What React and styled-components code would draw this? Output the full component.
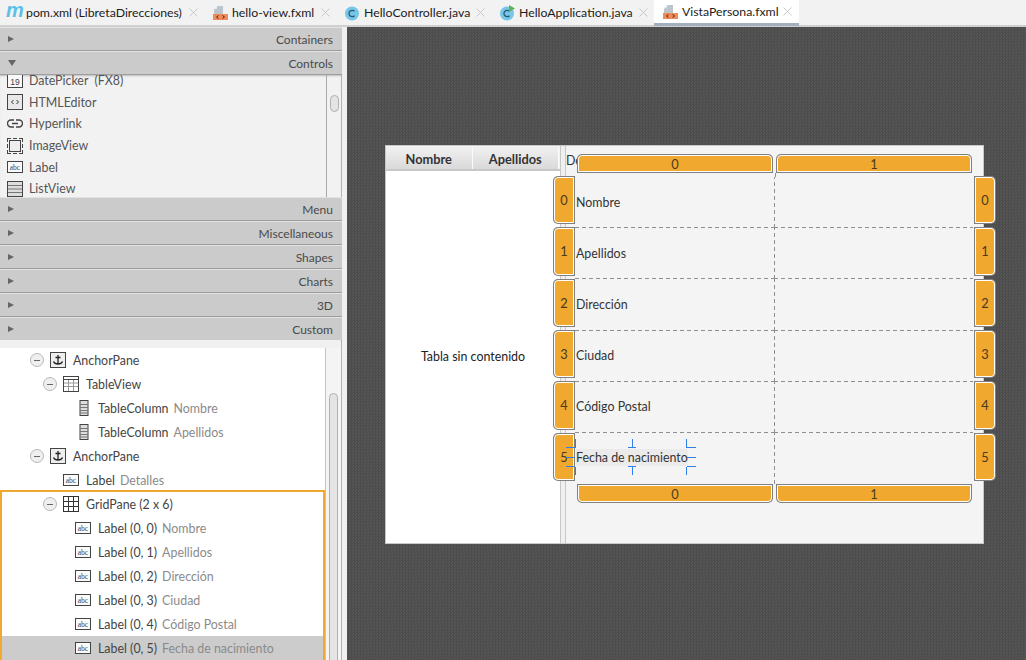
import styled, { createGlobalStyle } from 'styled-components'

const GlobalStyle = createGlobalStyle`
    html, body {
        margin: 0;
        padding: 0;
        background: #f2f2f2;
    }
    * {
        box-sizing: border-box;
    }
`

const Page = styled.div`
    width: 1026px;
    height: 660px;
    overflow: hidden;
    display: flex;
    flex-direction: column;
    font-family: Lato, "Open Sans", sans-serif;
    font-size: 12.4px;
    color: #444;
`

const TabBar = styled.div`
    height: 27px;
    flex: none;
    display: flex;
    background: #f2f2f2;
    border-bottom: 2px solid #d0d0d0;
`

const Tab = styled.div`
    display: flex;
    align-items: center;
    height: ${ p => p.$active ? `26px` : `25px` };
    width: ${ p => p.$w }px;
    padding-left: ${ p => p.$active ? 9 : 6 }px;
    flex: none;
    background: ${ p => p.$active ? `#fff` : `transparent` };
    border-bottom: ${ p => p.$active ? `3px solid #a3afbd` : `none` };
    font-size: 12.3px;
    color: #1c1c1c;
    white-space: nowrap;
`

const TabName = styled.span`
    margin-left: 4px;
    width: ${ p => p.$w }px;
    flex: none;
`

const TabClose = styled.span`
    display: flex;
    margin-left: 6px;
    color: #c8c8c8;
`

const MavenMark = styled.span`
    width: 16px;
    flex: none;
    font: italic bold 20px/20px "Liberation Sans", sans-serif;
    color: #5cc0e8;
    margin-top: -6px;
    letter-spacing: -1px;
`

const Main = styled.div`
    flex: 1;
    min-height: 0;
    display: flex;
`

const Sidebar = styled.div`
    width: 342px;
    flex: none;
    display: flex;
    flex-direction: column;
    border-right: 1px solid #b4b4b4;
    background: #f2f2f2;
`

const Section = styled.div`
    height: 24px;
    flex: none;
    display: flex;
    align-items: center;
    justify-content: space-between;
    padding: 0 9px 0 8px;
    margin-right: -1px;
    background: #cbcbcb;
    border-top: 1px solid #e2e2e2;
    border-bottom: 1px solid #9e9e9e;
    color: #4a4a4a;
    font-size: 12px;
`

const Arrow = styled.span`
    width: 0;
    height: 0;
    ${ p => p.$open
        ? `border-top: 6px solid #666; border-left: 4px solid transparent; border-right: 4px solid transparent;`
        : `border-left: 6px solid #666; border-top: 3.5px solid transparent; border-bottom: 3.5px solid transparent;` }
`

const Palette = styled.div`
    height: 122px;
    flex: none;
    display: flex;
    overflow: hidden;
    box-shadow: inset 0 2px 2px -1px #bbb;
`

const PaletteList = styled.div`
    width: 327px;
    flex: none;
    margin-top: -5px;
    border-right: 1px solid #a8a8a8;
`

const PaletteItem = styled.div`
    height: 21.6px;
    display: flex;
    align-items: center;
    gap: 6px;
    padding-left: 7px;
    color: #555;
    white-space: pre;
`

const Thumb = styled.div`
    border: 1px solid #b0b0b0;
    border-radius: 5px;
    background: #e4e4e4;
`

const PaletteTrack = styled.div`
    flex: 1;
    padding: 20px 3px 0 3px;

    ${ Thumb } {
        width: 9px;
        height: 17px;
    }
`

const SectionGap = styled.div`
    height: 8px;
    flex: none;
    background: #f0f0f0;
    margin-top: -1px;
`

const Hierarchy = styled.div`
    flex: 1;
    min-height: 0;
    display: flex;
    overflow: hidden;
`

const Tree = styled.div`
    width: 326px;
    flex: none;
    background: #fff;
    border-right: 1px solid #c4c4c4;
`

const SelectedGroup = styled.div`
    width: 325px;
    box-shadow: 0 -2px 0 #f0a830, inset 2px 0 0 #f0a830, inset -2px 0 0 #f0a830;
    position: relative;
`

const TreeRow = styled.div`
    height: 24px;
    display: flex;
    align-items: center;
    padding-left: ${ p => p.$indent }px;
    margin: ${ p => p.$selected ? `0 2px` : `0` };
    background: ${ p => p.$selected ? `#cccccc` : `transparent` };
    color: #444;
    white-space: nowrap;
`

const Toggle = styled.span`
    width: 14px;
    height: 14px;
    flex: none;
    margin-right: 6px;
    border-radius: 50%;
    border: 1px solid #b8b8b8;
    background: #efefef;
    display: flex;
    align-items: center;
    justify-content: center;

    &::before {
        content: "";
        width: 6px;
        height: 1px;
        background: #666;
    }
`

const TreeName = styled.span`
    margin-left: ${ p => p.$gap ?? 7 }px;
`

const TreeDetail = styled.span`
    margin-left: 5px;
    color: #8a8a8a;
`

const TreeTrack = styled.div`
    flex: 1;
    padding: 45px 3px 0 3px;
    background: #f4f4f4;

    ${ Thumb } {
        width: 9px;
        height: 300px;
    }
`

const Splitter = styled.div`
    width: 5px;
    flex: none;
    background: #f0f0f0;
`

const Canvas = styled.div`
    flex: 1;
    min-width: 0;
    padding: 118px 0 0 38px;
    background-color: #505050;
    background-image: repeating-conic-gradient(#4c4c4c 0 25%, #555 0 50%);
    background-size: 3px 3px;
`

const Form = styled.div`
    width: 599px;
    height: 399px;
    display: flex;
    background: #f4f4f4;
    border: 1px solid #c8c8c8;
`

const Table = styled.div`
    width: 174px;
    flex: none;
    display: flex;
    flex-direction: column;
    background: #fff;
`

const TableHead = styled.div`
    height: 25px;
    flex: none;
    display: flex;
    border-bottom: 2px solid #c8c8c8;
    padding-right: 1px;
    background: #f4f4f4;
`

const HeadCell = styled.div`
    flex: 1;
    display: flex;
    align-items: center;
    justify-content: center;
    padding-top: 2px;
    background: linear-gradient(#f2f2f2, #d9d9d9);
    border-right: 1px solid #fafafa;
    font-weight: 700;
    font-size: 12.8px;
    color: #333;
`

const TableEmpty = styled.div`
    flex: 1;
    display: flex;
    align-items: center;
    justify-content: center;
    padding-bottom: 1px;
    color: #222;
`

const Divider = styled.div`
    width: 6px;
    flex: none;
    background: #f0f0f0;
    border-left: 1px solid #c8c8c8;
    border-right: 1px solid #c8c8c8;
`

const Details = styled.div`
    flex: 1;
    min-width: 0;
    padding-left: 9px;
    display: flex;
    flex-direction: column;
`

const DetailsTitle = styled.div`
    height: 31px;
    flex: none;
    margin-left: -9px;
    padding-top: 7px;
    color: #333;
`

const GridWrap = styled.div`
    position: relative;
    width: 398px;
    height: 307px;

    &::after {
        content: "";
        position: absolute;
        left: 200px;
        top: -4px;
        width: 1px;
        height: 4px;
        background: #8f8f8f;
    }
`

const Grid = styled.div`
    width: 100%;
    height: 100%;
    display: grid;
    grid-template-columns: 1fr 1fr;
    grid-template-rows: repeat(6, 1fr);
`

const dash_h = `repeating-linear-gradient(90deg, #8f8f8f 0 4px, transparent 4px 7px) left bottom / 100% 1px no-repeat`
const dash_v = `repeating-linear-gradient(0deg, #8f8f8f 0 4px, transparent 4px 7px) left top / 1px 100% no-repeat`

const Cell = styled.div`
    display: flex;
    align-items: center;
    padding-left: 1px;
    background: ${ p => [ !p.$last && dash_h, p.$right && dash_v ].filter( Boolean ).join( `, ` ) || `none` };
`

const CellLabel = styled.span`
    display: flex;
    align-items: center;
    height: 17px;
    margin-top: -1px;
    background: ${ p => p.$selected ? `#ebebeb` : `transparent` };
    color: #333;
    white-space: nowrap;
`

const ColumnHandles = styled.div`
    position: absolute;
    left: 3px;
    width: 393px;
    height: 17px;
    display: flex;
    gap: 5px;
    ${ p => p.$side === `top` ? `top: -22px;` : `bottom: -18px;` }
`

const RowHandles = styled.div`
    position: absolute;
    top: 0;
    width: 20px;
    height: 303px;
    display: flex;
    flex-direction: column;
    gap: 5px;
    ${ p => p.$side === `left` ? `left: -21px;` : `left: 400px;` }
`

const radius = {
    top: `4px 4px 0 0`,
    bottom: `0 0 4px 4px`,
    left: `4px 0 0 4px`,
    right: `0 4px 4px 0`
}

const Handle = styled.div`
    flex: 1;
    display: flex;
    align-items: center;
    justify-content: center;
    background: #f0a82e;
    border: 1px solid #fff;
    border-radius: ${ p => radius[ p.$side ] };
    box-shadow: 0 0 0 1px #808080;
    color: #4a3a20;
    font-size: 12.8px;
`

const SelectionMarks = styled.svg`
    position: absolute;
    left: -10px;
    top: 261px;
    pointer-events: none;
`

const Dim = ( { children, ...props } ) => <svg width="16" height="16" viewBox="0 0 16 16" style={ { flex: `none` } } { ...props }>{ children }</svg>

const DateIcon = () => <Dim>
    <rect x=".5" y="1.5" width="15" height="13" fill="#fafafa" stroke="#444" />
    <text x="8" y="11.5" fontSize="8.5" fontFamily="Liberation Sans" textAnchor="middle" fill="#444">19</text>
</Dim>

const HtmlIcon = () => <Dim>
    <rect x=".5" y=".5" width="15" height="15" fill="#e8e8e8" stroke="#444" />
    <path d="M6.5 6 L4.5 8 L6.5 10 M9.5 6 L11.5 8 L9.5 10" fill="none" stroke="#333" />
</Dim>

const LinkIcon = () => <Dim>
    <path d="M7 4H4a3.500 3.500 0 0 0 0 7h3M9 4h3a3.500 3.500 0 0 1 0 7H9M5 7.500h6" fill="none" stroke="#444" strokeWidth="1.4" />
</Dim>

const ImageIcon = () => <Dim>
    <rect x="2.5" y="2.5" width="11" height="11" fill="#eee" stroke="#444" />
    <path d="M0 .5h4M6 .5h4M12 .5h4M0 15.5h4M6 15.5h4M12 15.5h4M.5 0v4M.5 6v4M.5 12v4M15.5 0v4M15.5 6v4M15.5 12v4" stroke="#444" />
</Dim>

const LabelIcon = () => <Dim>
    <rect x=".5" y="2.5" width="15" height="11" fill="#fafafa" stroke="#444" />
    <text x="8" y="10.5" fontSize="7.5" fontFamily="Liberation Serif" textAnchor="middle" fill="#444">abc</text>
</Dim>

const ListIcon = () => <Dim>
    <rect x=".5" y=".5" width="15" height="15" fill="#ddd" stroke="#444" />
    <path d="M1 4.5h14M1 8h14M1 11.5h14" stroke="#777" />
</Dim>

const AnchorIcon = () => <Dim>
    <rect x=".5" y=".5" width="15" height="15" fill="#eee" stroke="#444" />
    <path d="M8 3v9M5.5 5.5h5M3.5 9.5c1 2.5 3 2.5 4.5 2.5s3.500 0 4.500-2.500" fill="none" stroke="#222" strokeWidth="1.3" />
</Dim>

const TableIcon = () => <Dim>
    <rect x=".5" y=".5" width="15" height="15" fill="#fff" stroke="#444" />
    <path d="M1 3.5h14" stroke="#444" />
    <path d="M1 7h14M1 10.500h14M5.500 4v11M10.500 4v11" stroke="#999" />
</Dim>

const ColumnIcon = () => <Dim>
    <rect x="4" y=".5" width="8" height="15" fill="#ddd" stroke="#444" />
    <path d="M4 4.500h8M4 7.500h8M4 10.500h8M4 13h8" stroke="#777" />
</Dim>

const GridIcon = () => <Dim>
    <rect x=".5" y=".5" width="15" height="15" fill="#fff" stroke="#333" />
    <path d="M5.500 1v14M10.500 1v14M1 5.500h14M1 10.500h14" stroke="#333" />
</Dim>

const XmlIcon = () => <svg width="15" height="16" viewBox="0 0 15 16" style={ { flex: `none` } }>
    <path d="M5 1h5v8H1V5z" fill="#bcc4cc" />
    <path d="M4 1v3H1z" fill="#e4e8ec" />
    <rect y="9" width="15" height="6" fill="#ef8a5c" />
    <path d="M5.500 10.500 L3.500 12 L5.500 13.500 M9.500 10.500 L11.500 12 L9.500 13.500" fill="none" stroke="#5a2a10" />
</svg>

const ClassIcon = ( { run } ) => <svg width="15" height="16" viewBox="0 0 15 16" style={ { flex: `none` } }>
    <circle cx="7" cy="8.500" r="7" fill="#75c6e8" />
    <path d="M9.500 6.300 A3.200 3.200 0 1 0 9.500 10.700" fill="none" stroke="#2a5a70" strokeWidth="1.300" />
    { run && <path d="M9 0v7l6-3.500z" fill="#5cb450" /> }
</svg>

const CloseIcon = () => <svg width="9" height="9" viewBox="0 0 9 9">
    <path d="M.5 .5l8 8M8.500 .5l-8 8" stroke="currentColor" strokeWidth="1" />
</svg>

const tabs = [
    { name: `pom.xml (LibretaDirecciones)`, w: 207, name_w: 157, icon: <MavenMark>m</MavenMark> },
    { name: `hello-view.fxml`, w: 132, name_w: 83, icon: <XmlIcon /> },
    { name: `HelloController.java`, w: 155, name_w: 106, icon: <ClassIcon /> },
    { name: `HelloApplication.java`, w: 160, name_w: 114, icon: <ClassIcon run /> },
    { name: `VistaPersona.fxml`, w: 145, name_w: 95, icon: <XmlIcon />, active: true },
]

const controls = [
    { name: `DatePicker  (FX8)`, icon: <DateIcon /> },
    { name: `HTMLEditor`, icon: <HtmlIcon /> },
    { name: `Hyperlink`, icon: <LinkIcon /> },
    { name: `ImageView`, icon: <ImageIcon /> },
    { name: `Label`, icon: <LabelIcon /> },
    { name: `ListView`, icon: <ListIcon /> },
]

const grid_labels = [ `Nombre`, `Apellidos`, `Dirección`, `Ciudad`, `Código Postal`, `Fecha de nacimiento` ]

export default function App() {

    return <Page>
        <GlobalStyle />

        <TabBar>
            { tabs.map( tab => <Tab key={ tab.name } $w={ tab.w } $active={ tab.active }>
                { tab.icon }
                <TabName $w={ tab.name_w }>{ tab.name }</TabName>
                <TabClose><CloseIcon /></TabClose>
            </Tab> ) }
        </TabBar>

        <Main>
            <Sidebar>
                <Section><Arrow /><span>Containers</span></Section>
                <Section><Arrow $open /><span>Controls</span></Section>
                <Palette>
                    <PaletteList>
                        { controls.map( item => <PaletteItem key={ item.name }>
                            { item.icon }
                            <span>{ item.name }</span>
                        </PaletteItem> ) }
                    </PaletteList>
                    <PaletteTrack><Thumb /></PaletteTrack>
                </Palette>
                { [ `Menu`, `Miscellaneous`, `Shapes`, `Charts`, `3D`, `Custom` ].map( name =>
                    <Section key={ name }><Arrow /><span>{ name }</span></Section> ) }
                <SectionGap />
                <Hierarchy>
                    <Tree>
                        <TreeRow $indent={ 30 }><Toggle /><AnchorIcon /><TreeName>AnchorPane</TreeName></TreeRow>
                        <TreeRow $indent={ 43 }><Toggle /><TableIcon /><TreeName>TableView</TreeName></TreeRow>
                        <TreeRow $indent={ 76 }><ColumnIcon /><TreeName $gap={ 6 }>TableColumn</TreeName><TreeDetail>Nombre</TreeDetail></TreeRow>
                        <TreeRow $indent={ 76 }><ColumnIcon /><TreeName $gap={ 6 }>TableColumn</TreeName><TreeDetail>Apellidos</TreeDetail></TreeRow>
                        <TreeRow $indent={ 30 }><Toggle /><AnchorIcon /><TreeName>AnchorPane</TreeName></TreeRow>
                        <TreeRow $indent={ 63 }><LabelIcon /><TreeName>Label</TreeName><TreeDetail>Detalles</TreeDetail></TreeRow>
                        <SelectedGroup>
                            <TreeRow $indent={ 43 }><Toggle /><GridIcon /><TreeName>GridPane (2 x 6)</TreeName></TreeRow>
                            { grid_labels.map( ( label, i ) => <TreeRow key={ label } $indent={ i === 5 ? 73 : 75 } $selected={ i === 5 }>
                                <LabelIcon />
                                <TreeName>Label (0, { i })</TreeName>
                                <TreeDetail>{ label }</TreeDetail>
                            </TreeRow> ) }
                        </SelectedGroup>
                    </Tree>
                    <TreeTrack><Thumb /></TreeTrack>
                </Hierarchy>
            </Sidebar>

            <Splitter />

            <Canvas>
                <Form>
                    <Table>
                        <TableHead>
                            <HeadCell>Nombre</HeadCell>
                            <HeadCell>Apellidos</HeadCell>
                        </TableHead>
                        <TableEmpty>Tabla sin contenido</TableEmpty>
                    </Table>
                    <Divider />
                    <Details>
                        <DetailsTitle>Detalles</DetailsTitle>
                        <GridWrap>
                            <Grid>
                                { grid_labels.map( ( label, i ) => [
                                    <Cell key={ label } $last={ i === 5 }>
                                        <CellLabel $selected={ i === 5 }>{ label }</CellLabel>
                                    </Cell>,
                                    <Cell key={ `${ label }-right` } $right $last={ i === 5 } />
                                ] ) }
                            </Grid>
                            <ColumnHandles $side="top">
                                <Handle $side="top">0</Handle>
                                <Handle $side="top">1</Handle>
                            </ColumnHandles>
                            <ColumnHandles $side="bottom">
                                <Handle $side="bottom">0</Handle>
                                <Handle $side="bottom">1</Handle>
                            </ColumnHandles>
                            <RowHandles $side="left">
                                { grid_labels.map( ( label, i ) => <Handle key={ label } $side="left">{ i }</Handle> ) }
                            </RowHandles>
                            <RowHandles $side="right">
                                { grid_labels.map( ( label, i ) => <Handle key={ label } $side="right">{ i }</Handle> ) }
                            </RowHandles>
                            <SelectionMarks width="132" height="38" viewBox="0 0 132 38">
                                <path
                                    d="M10.500 1v9M1 9.500h9M67.500 1v9M63 9.500h8M121.500 1v9M122 9.500h9M1 19.500h9M122 19.500h9M1 28.500h9M10.500 29v8M63 28.500h8M67.500 29v8M122 28.500h9M121.500 29v8"
                                    fill="none"
                                    stroke="#2f80ed"
                                />
                            </SelectionMarks>
                        </GridWrap>
                    </Details>
                </Form>
            </Canvas>
        </Main>
    </Page>

}
